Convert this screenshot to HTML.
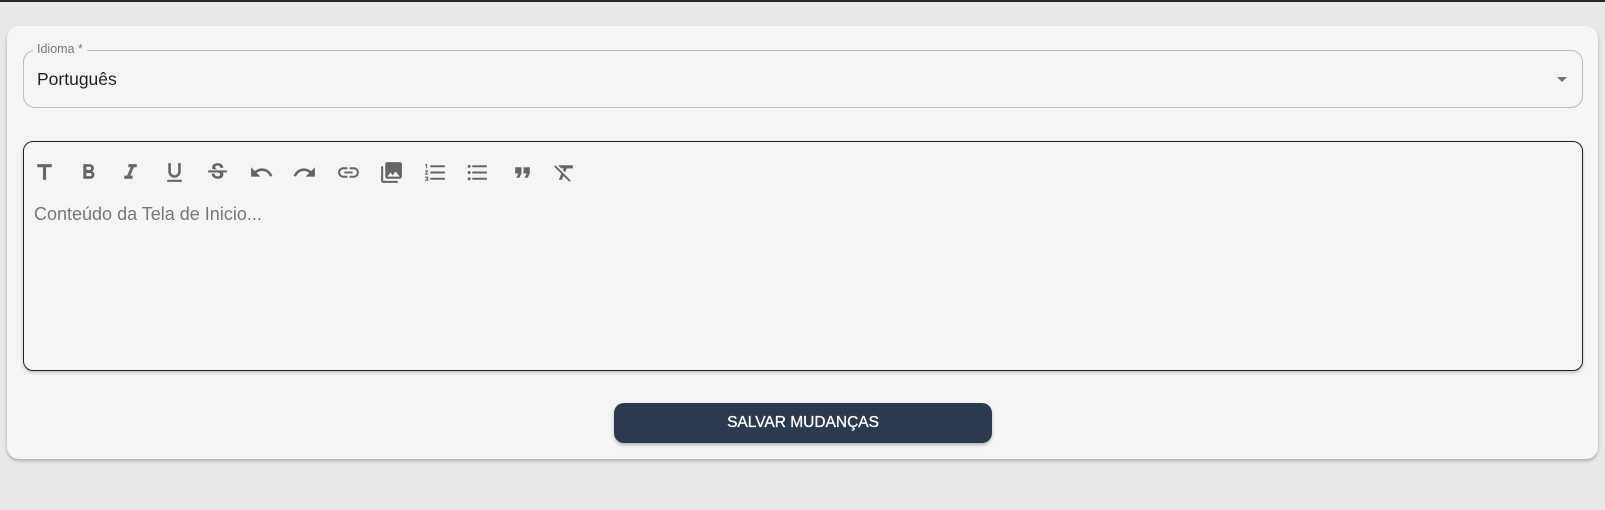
<!DOCTYPE html>
<html><head><meta charset="utf-8"><style>
*{box-sizing:border-box;margin:0;padding:0}
body{width:1605px;height:510px;background:#e8e8e8;font-family:"Liberation Sans",Arial,sans-serif;position:relative;overflow:hidden}
.topbar{position:absolute;left:0;top:0;width:1605px;height:2px;background:#23262b}
.card{position:absolute;left:7px;top:26px;width:1591px;height:433px;background:#f5f5f5;border-radius:12px;box-shadow:0 2px 3px rgba(0,0,0,.25)}
.sel{position:absolute;left:23px;top:50px;width:1560px;height:58px;border:1px solid #bdbdbd;border-radius:12px}
.lbl{position:absolute;left:33px;top:42px;padding:0 4px;background:#f5f5f5;font-size:12.5px;color:#777}
.val{position:absolute;left:37px;top:69px;font-size:17.5px;color:#222}
.arrow{position:absolute;left:1557px;top:77px;width:0;height:0;border-left:5px solid transparent;border-right:5px solid transparent;border-top:5px solid #757575}
.ed{position:absolute;left:23px;top:141px;width:1560px;height:230px;border:1px solid #222;border-radius:10px;box-shadow:0 2px 3px rgba(0,0,0,.2)}
.ic{position:absolute;top:160px;width:25px;height:25px}
.ic path{fill:#666}
.ph{position:absolute;left:34px;top:204px;font-size:18px;color:#777}
.btn{position:absolute;left:614px;top:403px;width:378px;height:40px;background:#2b3a4f;border-radius:10px;box-shadow:0 2px 3px rgba(0,0,0,.25);color:#fff;font-size:15.5px;text-align:center;line-height:40px;-webkit-text-stroke:0.3px #fff}
</style></head><body>
<div class="topbar"></div>
<div class="card"></div>
<div class="sel"></div>
<div class="lbl">Idioma *</div>
<div class="val">Português</div>
<div class="arrow"></div>
<div class="ed"></div>
<svg class="ic" style="left:32px" viewBox="0 0 24 24"><path d="M5 4v3h5.5v12h3V7H19V4z"/></svg>
<svg class="ic" style="left:76px" viewBox="0 0 24 24"><path d="M15.6 10.79c.97-.67 1.65-1.77 1.65-2.79 0-2.26-1.75-4-4-4H7v14h7.04c2.09 0 3.71-1.7 3.71-3.79 0-1.52-.86-2.82-2.15-3.42zM10 6.5h3c.83 0 1.5.67 1.5 1.5s-.67 1.5-1.5 1.5h-3v-3zm3.5 9H10v-3h3.5c.83 0 1.5.67 1.5 1.5s-.67 1.5-1.5 1.5z"/></svg>
<svg class="ic" style="left:118px" viewBox="0 0 24 24"><path d="M10 4v3h2.21l-3.42 8H6v3h8v-3h-2.21l3.42-8H18V4z"/></svg>
<svg class="ic" style="left:162px" viewBox="0 0 24 24"><path d="M12 17c3.31 0 6-2.69 6-6V3h-2.5v8c0 1.93-1.57 3.5-3.5 3.5S8.5 12.93 8.5 11V3H6v8c0 3.31 2.69 6 6 6zm-7 2v2h14v-2H5z"/></svg>
<svg class="ic" style="left:205px" viewBox="0 0 24 24"><path d="M7.24 8.75c-.26-.48-.39-1.03-.39-1.67 0-.61.13-1.16.4-1.67.26-.5.63-.93 1.11-1.29.48-.35 1.05-.63 1.7-.83.66-.19 1.39-.29 2.18-.29.81 0 1.54.11 2.21.34.66.22 1.23.54 1.69.94.47.4.83.88 1.08 1.43.25.55.38 1.150.38 1.81h-3.01c0-.31-.05-.59-.15-.85-.09-.27-.24-.49-.44-.68-.2-.19-.45-.33-.75-.44-.3-.1-.66-.16-1.06-.16-.39 0-.74.04-1.03.13-.29.09-.53.21-.72.36-.19.16-.34.34-.44.55-.1.21-.15.43-.15.66 0 .48.25.88.74 1.21.38.25.77.48 1.41.7H7.39c-.05-.08-.11-.17-.15-.25zM21 12v-2H3v2h9.62c.18.07.4.14.55.2.37.17.66.34.87.51.21.17.35.36.43.57.07.2.11.43.11.69 0 .23-.05.45-.14.66-.09.2-.23.38-.42.53-.19.15-.42.26-.71.35-.29.08-.63.13-1.01.13-.43 0-.83-.04-1.18-.13s-.66-.23-.91-.42c-.25-.19-.45-.44-.59-.75-.14-.31-.25-.76-.25-1.21H6.4c0 .55.08 1.13.24 1.58.16.45.37.85.65 1.21.28.35.6.66.98.92.37.26.78.48 1.22.65.44.17.9.3 1.38.39.48.08.96.13 1.44.13.8 0 1.53-.09 2.18-.28s1.21-.45 1.67-.79c.46-.34.82-.77 1.07-1.27s.38-1.07.38-1.71c0-.6-.1-1.14-.31-1.61-.05-.11-.11-.23-.17-.33H21z"/></svg>
<svg class="ic" style="left:249px" viewBox="0 0 24 24"><path d="M12.5 8c-2.65 0-5.05.99-6.9 2.6L2 7v9h9l-3.62-3.62c1.39-1.16 3.16-1.88 5.12-1.88 3.54 0 6.55 2.31 7.6 5.5l2.37-.78C21.08 11.03 17.15 8 12.5 8z"/></svg>
<svg class="ic" style="left:292px" viewBox="0 0 24 24"><path d="M18.4 10.6C16.55 8.99 14.15 8 11.5 8c-4.65 0-8.58 3.03-9.96 7.22L3.9 16c1.05-3.19 4.05-5.5 7.6-5.5 1.95 0 3.73.72 5.12 1.88L13 16h9V7l-3.6 3.6z"/></svg>
<svg class="ic" style="left:336px" viewBox="0 0 24 24"><path d="M3.9 12c0-1.71 1.39-3.1 3.1-3.1h4V7H7c-2.76 0-5 2.24-5 5s2.24 5 5 5h4v-1.9H7c-1.71 0-3.1-1.39-3.1-3.1zM8 13h8v-2H8v2zm9-6h-4v1.9h4c1.71 0 3.1 1.39 3.1 3.1s-1.39 3.1-3.1 3.1h-4V17h4c2.76 0 5-2.24 5-5s-2.24-5-5-5z"/></svg>
<svg class="ic" style="left:379px" viewBox="0 0 24 24"><path d="M22 16V4c0-1.1-.9-2-2-2H8c-1.1 0-2 .9-2 2v12c0 1.1.9 2 2 2h12c1.1 0 2-.9 2-2zm-11-4l2.03 2.71L16 11l4 5H8l3-4zM2 6v14c0 1.1.9 2 2 2h14v-2H4V6H2z"/></svg>
<svg class="ic" style="left:423px" viewBox="0 0 24 24"><path d="M2 17h2v.5H3v1h1v.5H2v1h3v-4H2v1zm1-9h1V4H2v1h1v3zm-1 3h1.8L2 13.1v.9h3v-1H3.2L5 10.9V10H2v1zm5-6v2h14V5H7zm0 14h14v-2H7v2zm0-6h14v-2H7v2z"/></svg>
<svg class="ic" style="left:465px" viewBox="0 0 24 24"><path d="M4 10.5c-.83 0-1.5.67-1.5 1.5s.67 1.5 1.5 1.5 1.5-.67 1.5-1.5-.67-1.5-1.5-1.5zm0-6c-.83 0-1.5.67-1.5 1.5S3.17 7.5 4 7.5 5.5 6.83 5.5 6 4.83 4.5 4 4.5zm0 12c-.83 0-1.5.68-1.5 1.5s.68 1.5 1.5 1.5 1.5-.68 1.5-1.5-.67-1.5-1.5-1.5zM7 19h14v-2H7v2zm0-6h14v-2H7v2zm0-8v2h14V5H7z"/></svg>
<svg class="ic" style="left:510px" viewBox="0 0 24 24"><path d="M6 17h3l2-4V7H5v6h3zm8 0h3l2-4V7h-6v6h3z"/></svg>
<svg class="ic" style="left:552px" viewBox="0 0 24 24"><path d="M3.27 5L2 6.27l6.97 6.97L6.5 19h3l1.57-3.66L16.73 21 18 19.73 3.55 5.27 3.27 5zM6 5v.18L8.82 8h2.4l-.72 1.68 2.1 2.1L14.21 8H20V5H6z"/></svg>
<div class="ph">Conteúdo da Tela de Inicio...</div>
<div class="btn">SALVAR MUDANÇAS</div>
</body></html>
